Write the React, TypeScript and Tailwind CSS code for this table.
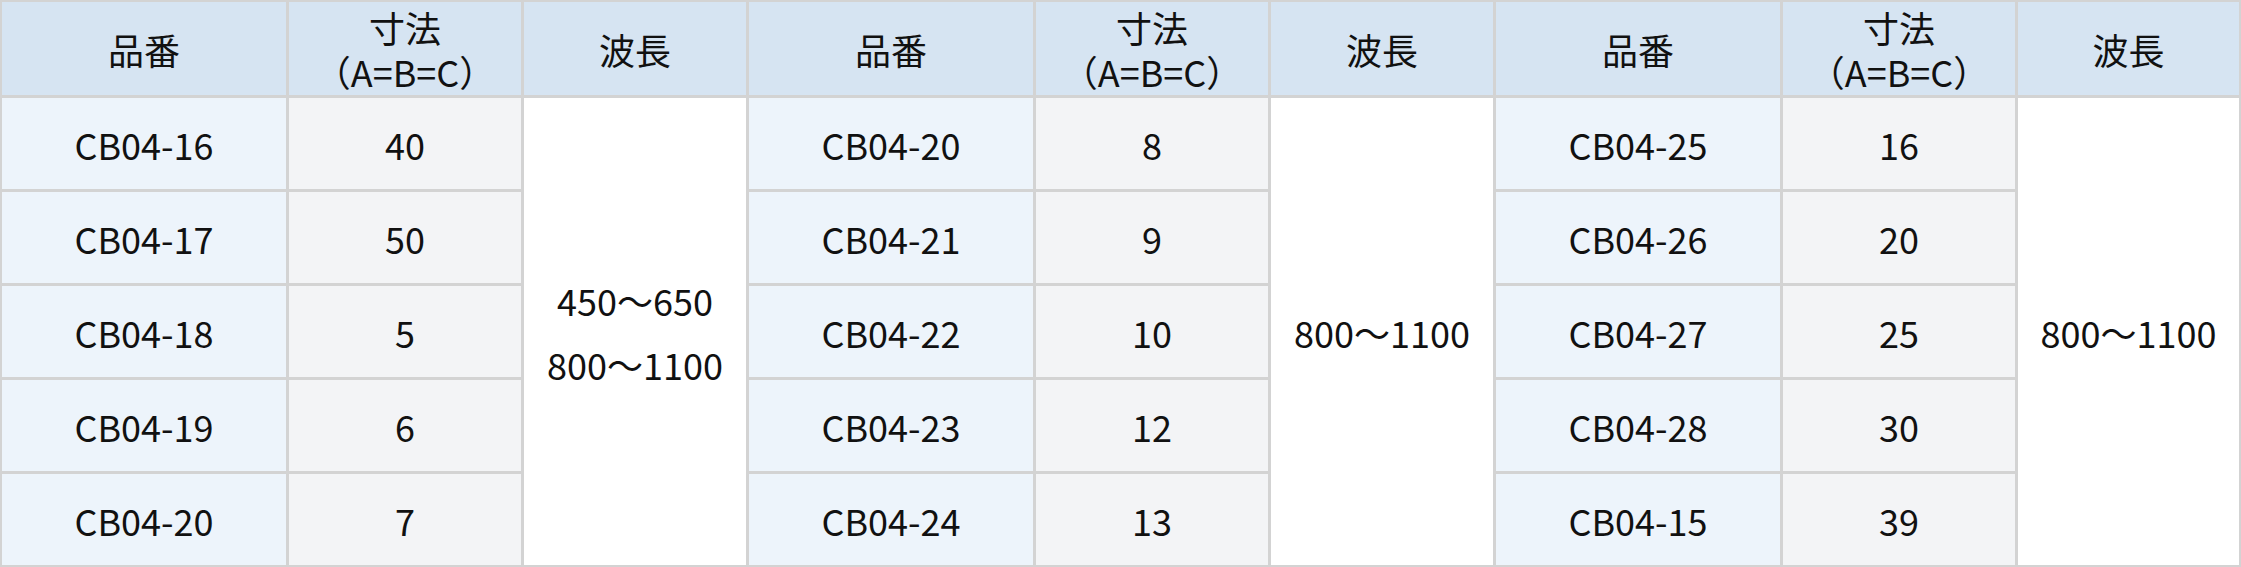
const groups = [
  {
    cols: ['col-start-1', 'col-start-2', 'col-start-3'],
    rows: [
      ['CB04-16', '40'],
      ['CB04-17', '50'],
      ['CB04-18', '5'],
      ['CB04-19', '6'],
      ['CB04-20', '7'],
    ],
    wave: ['450～650', '800～1100'],
  },
  {
    cols: ['col-start-4', 'col-start-5', 'col-start-6'],
    rows: [
      ['CB04-20', '8'],
      ['CB04-21', '9'],
      ['CB04-22', '10'],
      ['CB04-23', '12'],
      ['CB04-24', '13'],
    ],
    wave: ['800～1100'],
  },
  {
    cols: ['col-start-7', 'col-start-8', 'col-start-9'],
    rows: [
      ['CB04-25', '16'],
      ['CB04-26', '20'],
      ['CB04-27', '25'],
      ['CB04-28', '30'],
      ['CB04-15', '39'],
    ],
    wave: ['800～1100'],
  },
]

const rowStarts = ['row-start-2', 'row-start-3', 'row-start-4', 'row-start-5', 'row-start-6']

const cell = 'flex items-center justify-center text-center'

export default function App() {
  return (
    <div className="w-[2241px] h-[567px] bg-white text-[36px] text-[#111] overflow-hidden font-['Noto_Sans_CJK_JP','Noto_Sans',sans-serif]">
      <div className="grid h-full grid-cols-[284px_232px_222px_284px_232px_222px_284px_232px_221px] grid-rows-[93px_91px_91px_91px_91px_91px] gap-[3px] p-[2px] bg-[#d3d3d3]">
        {groups.map((g, gi) => [
          <div key={`h1-${gi}`} className={`${cell} row-start-1 bg-[#d6e4f2] ${g.cols[0]}`}>
            品番
          </div>,
          <div key={`h2-${gi}`} className={`${cell} row-start-1 flex-col bg-[#d6e4f2] leading-[44px] ${g.cols[1]}`}>
            <span>寸法</span>
            <span>（A=B=C）</span>
          </div>,
          <div key={`h3-${gi}`} className={`${cell} row-start-1 bg-[#d6e4f2] ${g.cols[2]}`}>
            波長
          </div>,
          ...g.rows.flatMap(([code, size], ri) => [
            <div key={`c-${gi}-${ri}`} className={`${cell} bg-[#edf4fb] ${g.cols[0]} ${rowStarts[ri]}`}>
              {code}
            </div>,
            <div key={`s-${gi}-${ri}`} className={`${cell} bg-[#f3f4f6] ${g.cols[1]} ${rowStarts[ri]}`}>
              {size}
            </div>,
          ]),
          <div key={`w-${gi}`} className={`${cell} row-start-2 row-span-5 flex-col bg-white leading-[64px] ${g.cols[2]}`}>
            {g.wave.map((w) => (
              <span key={w}>{w}</span>
            ))}
          </div>,
        ])}
      </div>
    </div>
  )
}
